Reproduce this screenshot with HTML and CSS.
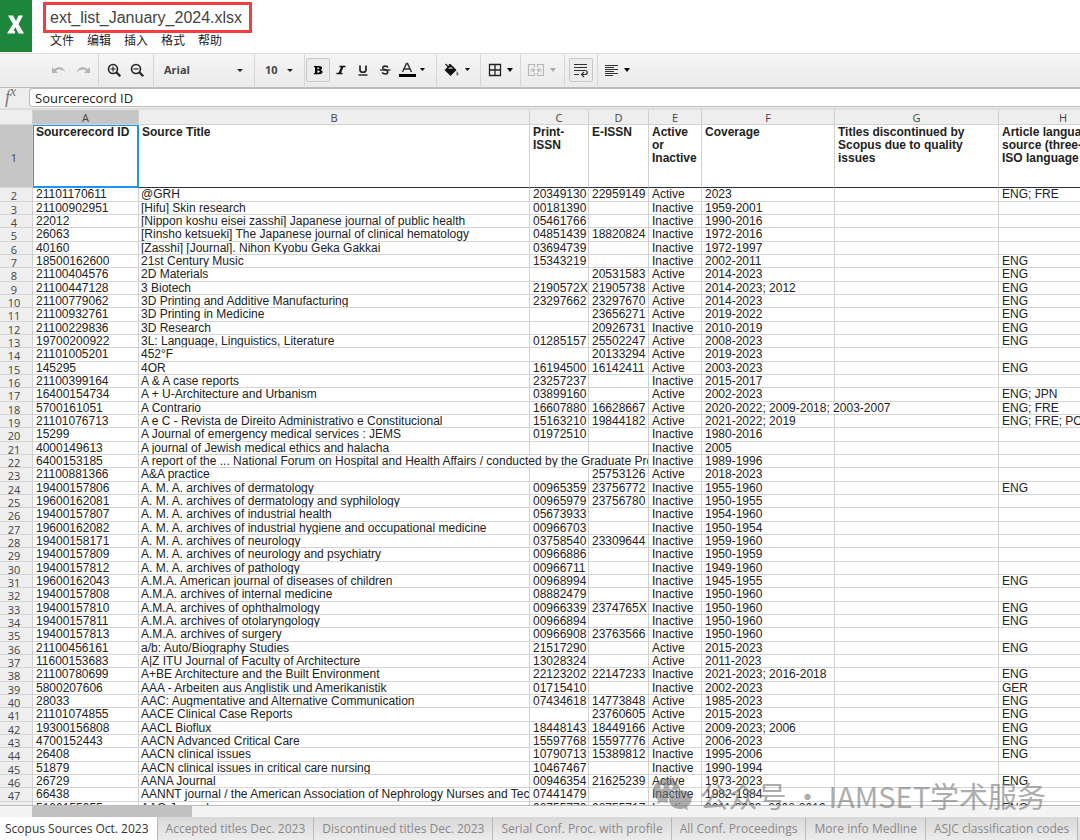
FILE: index.html
```html
<!DOCTYPE html>
<html lang="zh-CN">
<head>
<meta charset="utf-8">
<title>ext_list_January_2024.xlsx</title>
<link rel="stylesheet" href="styles.css">
</head>
<body>
<header class="top">
  <div class="logo"><svg width="32" height="52" viewBox="0 0 32 52" aria-label="Excel"><path d="M8 15.500h5l3 5.500 2.500-5.500H23l-4.500 8.700L24 33.500h-5.500L15.300 27l-1.800 4h1.500v2.500H7L13 24z" fill="#fff"/></svg></div>
  <div class="titles">
    <h1 class="filename">ext_list_January_2024.xlsx</h1>
    <nav class="menu"><button>文件</button><button>编辑</button><button>插入</button><button>格式</button><button>帮助</button></nav>
  </div>
</header>
<div class="toolbar">
  <div class="group history">
    <button class="tool faded" aria-label="Undo"><svg width="16" height="16" viewBox="0 0 16 16"><path d="M1 5v6h6L4.800 8.800C7 7 11.500 7 14 10.500 13.500 5.500 8 3.500 3.200 7.200z" fill="#b4b4b4"/></svg></button>
    <button class="tool faded" aria-label="Redo"><svg width="16" height="16" viewBox="0 0 16 16"><path d="M15 5v6H9l2.200-2.200C9 7 4.500 7 2 10.500 2.500 5.500 8 3.500 12.800 7.200z" fill="#b4b4b4"/></svg></button>
  </div>
  <div class="group zooms">
    <button class="tool" aria-label="Zoom in"><svg width="16" height="16" viewBox="0 0 16 16" fill="none" stroke="#222"><circle cx="7" cy="7" r="4.500" stroke-width="1.600"/><path d="M10.300 10.300l4 4" stroke-width="2.200"/><path d="M4.500 7h5M7 4.500v5" stroke-width="1.200"/></svg></button>
    <button class="tool" aria-label="Zoom out"><svg width="16" height="16" viewBox="0 0 16 16" fill="none" stroke="#222"><circle cx="7" cy="7" r="4.500" stroke-width="1.600"/><path d="M10.300 10.300l4 4" stroke-width="2.200"/><path d="M4.500 7h5" stroke-width="1.200"/></svg></button>
  </div>
  <div class="group font"><button class="drop"><span>Arial</span><i class="caret"></i></button></div>
  <div class="group size"><button class="drop"><span>10</span><i class="caret"></i></button></div>
  <div class="group styles">
    <button class="tool pressed" aria-label="Bold"><svg width="16" height="16" viewBox="0 0 16 16"><path fill-rule="evenodd" d="M4 4h5c2 0 3 .8 3 2 0 1-.6 1.600-1.500 1.900 1.200.2 2 1 2 2.100 0 1.400-1.200 2.200-3.200 2.200H4v-1.200h1V5.200H4zM7.300 5.400v1.900h.9c1.600 0 1.600-1.900 0-1.900zM7.300 8.600v2.200h1.200c1.700 0 1.700-2.200 0-2.200z"/></svg></button>
    <button class="tool" aria-label="Italic"><svg width="16" height="16" viewBox="0 0 16 16" fill="none" stroke="#111"><path d="M6.500 4.500h6M3.500 11.500h6" stroke-width="1.400"/><path d="M9.500 4.500l-3 7" stroke-width="2.200"/></svg></button>
    <button class="tool" aria-label="Underline"><svg width="16" height="16" viewBox="0 0 16 16" fill="none" stroke="#222"><path d="M5 3.500v4.500c0 3 6 3 6 0V3.500" stroke-width="1.700"/><path d="M3.500 13h9" stroke-width="1.400"/></svg></button>
    <button class="tool" aria-label="Strikethrough"><svg width="16" height="16" viewBox="0 0 16 16" fill="none" stroke="#222"><path d="M11 5.500C10 3.500 5.500 3.600 5.700 6c.2 2 5.100 1.600 5.100 4 0 2.400-4.300 2.600-5.600.4" stroke-width="1.600"/><path d="M3 8h10.500" stroke-width="1.300"/></svg></button>
    <button class="tool wide" aria-label="Text color"><svg width="28" height="18" viewBox="0 0 28 18"><path d="M4.500 11L8.500 2.500h1l4 8.500M6 8h6" fill="none" stroke="#333" stroke-width="1.500"/><path d="M1 13h17v3H1z"/><path d="M22 7h5l-2.500 3z"/></svg></button>
  </div>
  <div class="group fill"><button class="tool wide" aria-label="Fill color"><svg width="28" height="18" viewBox="0 0 28 18"><path d="M2.500 3l4 4M6.500 3v5" stroke="#222" fill="none" stroke-width="1.300"/><path d="M7.500 3L13.500 9 7.500 15 1.500 9z" fill="#111"/><path d="M6.500 6h2l1.500 2H5z" fill="#999"/><path d="M14 10c2 2.500 2 4.500.5 4.500s-1.500-2-.5-4.500z" fill="#777"/><path d="M22 7h5l-2.500 3z"/></svg></button></div>
  <div class="group borders"><button class="tool wide" aria-label="Borders"><svg width="28" height="18" viewBox="0 0 28 18"><path d="M2.500 3.500h11v11h-11zM8 3.500v11M2.500 9h11" fill="none" stroke="#222" stroke-width="1.300"/><path d="M20 7h6l-3 4z"/></svg></button></div>
  <div class="group merge"><button class="tool wide" aria-label="Merge cells"><svg width="32" height="18" viewBox="0 0 32 18"><path d="M7 3.500H1.500v11H7M11 3.500h5.500v11H11M7.500 3v3M10.500 3v3M7.500 12v3M10.500 12v3M3 9h4M15 9h-4M5.500 7l2 2-2 2M12.500 7l-2 2 2 2" fill="none" stroke="#b8b8b8" stroke-width="1.200"/><path d="M23 7h6l-3 4z" fill="#aaa"/></svg></button></div>
  <div class="group wrap"><button class="tool pressed" aria-label="Wrap text"><svg width="16" height="16" viewBox="0 0 16 16" fill="none" stroke="#333" stroke-width="1.200"><path d="M1 2.500h13M1 5.500h13M1 8.500h11c3 0 3 4 0 4H9M1 12.500h5M11 10l-2.500 2.500L11 15"/></svg></button></div>
  <div class="group align"><button class="tool wide" aria-label="Align"><svg width="28" height="18" viewBox="0 0 28 18"><path d="M1 4.500h13M1 6.500h9M1 8.500h13M1 10.500h9M1 12.500h13M1 14.500h8" stroke="#333" stroke-width="1.100"/><path d="M20 7h6l-3 4z"/></svg></button></div>
</div>
<div class="formula">
  <label class="fx" for="fx">f<sup>x</sup></label>
  <input id="fx" class="fxinput" value="Sourcerecord ID">
</div>
<main class="sheet">
<table class="cells">
<colgroup><col class="w-n"><col class="w-a"><col class="w-b"><col class="w-c"><col class="w-d"><col class="w-e"><col class="w-f"><col class="w-g"><col class="w-h"></colgroup>
<thead><tr><th><th class="on">A<th>B<th>C<th>D<th>E<th>F<th>G<th>H</thead>
<tbody>
<tr class="first"><th class="on">1<td class="sel">Sourcerecord ID<td>Source Title<td>Print-ISSN<td>E-ISSN<td>Active or Inactive<td>Coverage<td>Titles discontinued by Scopus due to quality issues<td>Article language in source (three-letter ISO language codes)
<tr><th>2<td>21101170611<td>@GRH<td>20349130<td>22959149<td>Active<td>2023<td><td>ENG; FRE
<tr><th>3<td>21100902951<td>[Hifu] Skin research<td>00181390<td><td>Inactive<td>1959-2001<td><td>
<tr><th>4<td>22012<td>[Nippon koshu eisei zasshi] Japanese journal of public health<td>05461766<td><td>Inactive<td>1990-2016<td><td>
<tr><th>5<td>26063<td>[Rinsho ketsueki] The Japanese journal of clinical hematology<td>04851439<td>18820824<td>Inactive<td>1972-2016<td><td>
<tr><th>6<td>40160<td>[Zasshi] [Journal]. Nihon Kyobu Geka Gakkai<td>03694739<td><td>Inactive<td>1972-1997<td><td>
<tr><th>7<td>18500162600<td>21st Century Music<td>15343219<td><td>Inactive<td>2002-2011<td><td>ENG
<tr><th>8<td>21100404576<td>2D Materials<td><td>20531583<td>Active<td>2014-2023<td><td>ENG
<tr><th>9<td>21100447128<td>3 Biotech<td>2190572X<td>21905738<td>Active<td>2014-2023; 2012<td><td>ENG
<tr><th>10<td>21100779062<td>3D Printing and Additive Manufacturing<td>23297662<td>23297670<td>Active<td>2014-2023<td><td>ENG
<tr><th>11<td>21100932761<td>3D Printing in Medicine<td><td>23656271<td>Active<td>2019-2022<td><td>ENG
<tr><th>12<td>21100229836<td>3D Research<td><td>20926731<td>Inactive<td>2010-2019<td><td>ENG
<tr><th>13<td>19700200922<td>3L: Language, Linguistics, Literature<td>01285157<td>25502247<td>Active<td>2008-2023<td><td>ENG
<tr><th>14<td>21101005201<td>452°F<td><td>20133294<td>Active<td>2019-2023<td><td>
<tr><th>15<td>145295<td>4OR<td>16194500<td>16142411<td>Active<td>2003-2023<td><td>ENG
<tr><th>16<td>21100399164<td>A &amp; A case reports<td>23257237<td><td>Inactive<td>2015-2017<td><td>
<tr><th>17<td>16400154734<td>A + U-Architecture and Urbanism<td>03899160<td><td>Active<td>2002-2023<td><td>ENG; JPN
<tr><th>18<td>5700161051<td>A Contrario<td>16607880<td>16628667<td>Active<td colspan="2">2020-2022; 2009-2018; 2003-2007<td>ENG; FRE
<tr><th>19<td>21101076713<td>A e C - Revista de Direito Administrativo e Constitucional<td>15163210<td>19844182<td>Active<td>2021-2022; 2019<td><td>ENG; FRE; POR
<tr><th>20<td>15299<td>A Journal of emergency medical services : JEMS<td>01972510<td><td>Inactive<td>1980-2016<td><td>
<tr><th>21<td>4000149613<td>A journal of Jewish medical ethics and halacha<td><td><td>Inactive<td>2005<td><td>
<tr><th>22<td>6400153185<td colspan="3">A report of the ... National Forum on Hospital and Health Affairs / conducted by the Graduate Pro<td>Inactive<td>1989-1996<td><td>
<tr><th>23<td>21100881366<td>A&amp;A practice<td><td>25753126<td>Active<td>2018-2023<td><td>
<tr><th>24<td>19400157806<td>A. M. A. archives of dermatology<td>00965359<td>23756772<td>Inactive<td>1955-1960<td><td>ENG
<tr><th>25<td>19600162081<td>A. M. A. archives of dermatology and syphilology<td>00965979<td>23756780<td>Inactive<td>1950-1955<td><td>
<tr><th>26<td>19400157807<td>A. M. A. archives of industrial health<td>05673933<td><td>Inactive<td>1954-1960<td><td>
<tr><th>27<td>19600162082<td>A. M. A. archives of industrial hygiene and occupational medicine<td>00966703<td><td>Inactive<td>1950-1954<td><td>
<tr><th>28<td>19400158171<td>A. M. A. archives of neurology<td>03758540<td>23309644<td>Inactive<td>1959-1960<td><td>
<tr><th>29<td>19400157809<td>A. M. A. archives of neurology and psychiatry<td>00966886<td><td>Inactive<td>1950-1959<td><td>
<tr><th>30<td>19400157812<td>A. M. A. archives of pathology<td>00966711<td><td>Inactive<td>1949-1960<td><td>
<tr><th>31<td>19600162043<td>A.M.A. American journal of diseases of children<td>00968994<td><td>Inactive<td>1945-1955<td><td>ENG
<tr><th>32<td>19400157808<td>A.M.A. archives of internal medicine<td>08882479<td><td>Inactive<td>1950-1960<td><td>
<tr><th>33<td>19400157810<td>A.M.A. archives of ophthalmology<td>00966339<td>2374765X<td>Inactive<td>1950-1960<td><td>ENG
<tr><th>34<td>19400157811<td>A.M.A. archives of otolaryngology<td>00966894<td><td>Inactive<td>1950-1960<td><td>ENG
<tr><th>35<td>19400157813<td>A.M.A. archives of surgery<td>00966908<td>23763566<td>Inactive<td>1950-1960<td><td>
<tr><th>36<td>21100456161<td>a/b: Auto/Biography Studies<td>21517290<td><td>Active<td>2015-2023<td><td>ENG
<tr><th>37<td>11600153683<td>A|Z ITU Journal of Faculty of Architecture<td>13028324<td><td>Active<td>2011-2023<td><td>
<tr><th>38<td>21100780699<td>A+BE Architecture and the Built Environment<td>22123202<td>22147233<td>Inactive<td>2021-2023; 2016-2018<td><td>ENG
<tr><th>39<td>5800207606<td>AAA - Arbeiten aus Anglistik und Amerikanistik<td>01715410<td><td>Inactive<td>2002-2023<td><td>GER
<tr><th>40<td>28033<td>AAC: Augmentative and Alternative Communication<td>07434618<td>14773848<td>Active<td>1985-2023<td><td>ENG
<tr><th>41<td>21101074855<td>AACE Clinical Case Reports<td><td>23760605<td>Active<td>2015-2023<td><td>ENG
<tr><th>42<td>19300156808<td>AACL Bioflux<td>18448143<td>18449166<td>Active<td>2009-2023; 2006<td><td>ENG
<tr><th>43<td>4700152443<td>AACN Advanced Critical Care<td>15597768<td>15597776<td>Active<td>2006-2023<td><td>ENG
<tr><th>44<td>26408<td>AACN clinical issues<td>10790713<td>15389812<td>Inactive<td>1995-2006<td><td>ENG
<tr><th>45<td>51879<td>AACN clinical issues in critical care nursing<td>10467467<td><td>Inactive<td>1990-1994<td><td>
<tr><th>46<td>26729<td>AANA Journal<td>00946354<td>21625239<td>Active<td>1973-2023<td><td>ENG
<tr><th>47<td>66438<td>AANNT journal / the American Association of Nephrology Nurses and Tec<td>07441479<td><td>Inactive<td>1982-1984<td><td>
<tr><th>48<td>5100155055<td>AAO Journal<td>08755770<td>08755717<td>Inactive<td>2011-2023; 2008-2019<td><td>ENG
</tbody>
</table>
</main>
<div class="scroll"><div class="thumb"></div></div>
<nav class="tabs"><button class="tab active">Scopus Sources Oct. 2023</button><button class="tab">Accepted titles Dec. 2023</button><button class="tab">Discontinued titles Dec. 2023</button><button class="tab">Serial Conf. Proc. with profile</button><button class="tab">All Conf. Proceedings</button><button class="tab">More info Medline</button><button class="tab">ASJC classification codes</button></nav>
<div class="mark">
  <svg width="40" height="34" viewBox="0 0 40 34"><path fill-rule="evenodd" d="M15 1C7 1 1 6 1 13c0 4 2 7 5 9l-1 4 5-2c2 .6 4 .8 6 .7C14 17 20 11 28 11 27 5 21 1 15 1zM10 7a2 2 0 110 4 2 2 0 010-4zm9 0a2 2 0 110 4 2 2 0 010-4z"/><path fill-rule="evenodd" d="M28 12c-6 0-11 4-11 9.500S22 31 28 31c1.500 0 3-.3 4-.7l4 2-1-3.500c3-2 4.500-4.300 4.500-7.300C39.500 16 34 12 28 12zm-4 4.500a1.600 1.600 0 110 3.200 1.600 1.600 0 010-3.200zm8 0a1.600 1.600 0 110 3.200 1.600 1.600 0 010-3.200z"/></svg>
  <span>公众号 · IAMSET学术服务</span>
</div>
</body>
</html>
```
FILE: styles.css
```css
* { box-sizing: border-box; }
body { margin: 0; height: 100vh; display: flex; flex-direction: column; position: relative; overflow: hidden; background: #eee; font-family: "Open Sans", "Noto Sans CJK SC", sans-serif; font-size: 12px; color: #222; }
button { border: 0; background: none; padding: 0; margin: 0; font: inherit; color: inherit; white-space: nowrap; }
svg { display: block; }

.top { display: flex; gap: 11px; background: #fff; height: 53px; flex: none; }
.logo { width: 32px; height: 52px; background: #1c873b; }
.titles { padding-top: 2px; }
.filename { margin: 0; padding: 0 7px 0 4px; border: 3px solid #f53d3d; font: 16px/25px "Liberation Sans", Arial, sans-serif; color: #444; }
.menu { display: flex; gap: 13px; padding-left: 7px; line-height: 15px; }

.toolbar { display: flex; flex: none; height: 35px; padding-bottom: 1px; border-top: 1px solid #ddd; border-bottom: 1px solid #bbb; background: linear-gradient(#f5f5f5, #ebebeb); }
.group { display: flex; align-items: center; border-right: 1px solid #d6d6d6; }
.history { width: 99px; padding-left: 51px; gap: 8px; }
.zooms { width: 55px; padding-left: 7px; gap: 7px; }
.font { width: 101px; }
.size { width: 50px; }
.styles { width: 132px; padding-left: 1px; }
.fill { width: 44px; padding-left: 6px; }
.borders { width: 40px; padding-left: 6px; }
.merge { width: 44px; padding-left: 6px; }
.wrap { width: 33px; padding-left: 4px; }
.align { padding-left: 6px; border-right: 0; }
.drop { display: flex; align-items: center; justify-content: space-between; width: 100%; padding: 0 11px 0 10px; font: bold 11px/16px "Open Sans", sans-serif; color: #444; }
.caret { border: 3px solid transparent; border-top-color: #222; border-bottom: 0; }
.styles .tool { width: 22px; height: 24px; display: flex; align-items: center; justify-content: center; }
.styles .wide { width: 30px; margin-left: 1px; }
.tool.pressed { width: 24px; height: 24px; display: flex; align-items: center; justify-content: center; border: 1px solid #c8c8c8; border-radius: 2px; background: #ececec; }

.formula { display: flex; flex: none; height: 22px; border-bottom: 2px solid #ddd; background: #eee; }
.fx { width: 29px; padding-left: 5px; font: italic 18px/16px "Liberation Serif", serif; color: #777; }
.fx sup { font-size: 14px; line-height: 8px; }
.fxinput { flex: 1; min-width: 0; height: 19px; border: 1px solid #bbb; border-right: 0; border-radius: 3px 0 0 3px; background: #fff; padding: 0 5px; font: 13px/17px "Open Sans", sans-serif; color: #222; }

.sheet { flex: 1; min-height: 0; overflow: hidden; background: #fff; border-bottom: 1px solid #bbb; }
.cells { table-layout: fixed; width: 1128px; border-collapse: separate; border-spacing: 0; font: 12px/12px "Liberation Sans", Arial, sans-serif; color: #222; }
.w-n { width: 33px; }
.w-a { width: 106px; }
.w-b { width: 391px; }
.w-c { width: 59px; }
.w-d { width: 60px; }
.w-e { width: 53px; }
.w-f { width: 133px; }
.w-g { width: 164px; }
.w-h { width: 129px; }
.cells th { padding: 4px 0 0; line-height: 8px; font-family: "Open Sans", sans-serif; font-size: 11px; font-weight: 400; color: #444; text-align: center; vertical-align: top; background: #eee; border-right: 1px solid #d0d0d0; border-bottom: 1px solid #d4d4d4; }
.cells tbody th { padding-right: 4px; }
.cells thead th { height: 15px; }
.cells .on { background: #c6c6c6; }
.cells td { height: 13px; padding: 0 0 0 3px; vertical-align: top; white-space: nowrap; overflow: hidden; border-right: 1px solid #d0d0d0; border-bottom: 1px solid #d4d4d4; }
.cells td:nth-child(3) { padding-left: 2px; }
.cells tbody tr:nth-child(3n+2) td { height: 14px; }
.cells .first td { height: 63px; padding-top: 1px; padding-left: 3px; white-space: normal; font-weight: 700; line-height: 13px; border-bottom-color: #333; }
.cells .first th { vertical-align: middle; }
.cells .first .sel { border-color: #1e96f0; box-shadow: inset 1px 1px #1e96f0, inset -1px -1px #1e96f0; }

.scroll { flex: none; height: 11px; padding-left: 32px; background: #f4f4f4; }
.thumb { width: 160px; height: 11px; background: #c1c1c1; }
.tabs { display: flex; flex: none; height: 23px; overflow: hidden; background: #e4e4e4; }
.tab { flex: none; padding: 0 8px; border-right: 1px solid #b8b8b8; background: linear-gradient(#d8d8d8, #ececec); color: #888; font-size: 12px; }
.tab.active { padding-left: 5px; background: #fff; color: #333; }

.mark { position: absolute; right: 34px; bottom: 25px; display: flex; align-items: center; gap: 8px; opacity: .6; color: #777; fill: #777; font: 29px/40px "Noto Sans CJK SC", sans-serif; white-space: nowrap; pointer-events: none; }
```
